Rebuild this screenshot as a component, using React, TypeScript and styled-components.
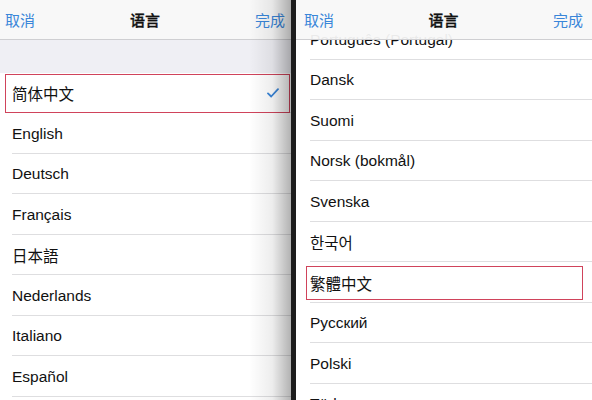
import styled, { createGlobalStyle } from 'styled-components';

const GlobalStyle = createGlobalStyle`
  body {
    margin: 0;
    font-family: "Liberation Sans", "Noto Sans CJK SC", "Noto Sans CJK KR", sans-serif;
    -webkit-font-smoothing: antialiased;
  }
`;

const Screen = styled.div`
  display: flex;
  gap: 5px;
  width: 592px;
  height: 400px;
  overflow: hidden;
  background: #1d1d1d;
`;

const Panel = styled.div<{ $width: number; $shaded?: boolean }>`
  position: relative;
  flex: 0 0 ${p => p.$width}px;
  overflow: hidden;
  background: #fff;

  &::after {
    content: '';
    display: ${p => (p.$shaded ? 'block' : 'none')};
    position: absolute;
    top: 0;
    right: 0;
    bottom: 0;
    width: 42px;
    z-index: 5;
    pointer-events: none;
    background: linear-gradient(to right, rgba(0, 0, 0, 0), rgba(0, 0, 0, 0.07) 55%, rgba(0, 0, 0, 0.3));
  }
`;

const NavBar = styled.div<{ $pad: number }>`
  position: absolute;
  top: 0;
  left: 0;
  right: 0;
  z-index: 3;
  height: 40px;
  box-sizing: border-box;
  display: grid;
  grid-template-columns: 1fr auto 1fr;
  align-items: center;
  padding: 0 ${p => p.$pad}px 0 ${p => p.$pad - 1}px;
  background: rgba(248, 248, 248, 0.94);
  border-bottom: 1px solid #cfcfd2;
  font-size: 15px;
`;

const NavButton = styled.span<{ $end?: boolean }>`
  color: #3a86d9;
  justify-self: ${p => (p.$end ? 'end' : 'start')};
`;

const NavTitle = styled.span`
  color: #111;
  font-weight: 500;
  -webkit-text-stroke: 0.3px #111;
`;

const List = styled.div<{ $top: number }>`
  margin-top: ${p => p.$top}px;
`;

const GroupGap = styled.div`
  height: 32.5px;
  background: #efeff4;
`;

const Row = styled.div<{ $inset: number; $box?: [number, number, number, number] }>`
  position: relative;
  height: 40.5px;
  display: flex;
  padding-left: ${p => p.$inset}px;
  background: #fff;

  &::before {
    content: '';
    display: ${p => (p.$box ? 'block' : 'none')};
    position: absolute;
    top: ${p => p.$box?.[0] ?? 0}px;
    right: ${p => p.$box?.[1] ?? 0}px;
    bottom: ${p => p.$box?.[2] ?? 0}px;
    left: ${p => p.$box?.[3] ?? 0}px;
    border: 1.5px solid #d0435b;
    z-index: 2;
  }
`;

const RowBody = styled.div`
  flex: 1;
  display: flex;
  align-items: center;
  justify-content: space-between;
  padding: 2px 12px 0 0;
  box-sizing: border-box;
  border-bottom: 1px solid #dedee0;
  font-size: 15.5px;
  color: #111;
`;

const Check = () => (
  <svg width="12" height="10" viewBox="0 0 12 10">
    <path d="M1 5.4 L4.2 8.5 L11 1.2" fill="none" stroke="#3a86d9" strokeWidth="1.8" strokeLinecap="round" strokeLinejoin="round" />
  </svg>
);

const leftItems = ['English', 'Deutsch', 'Français', '日本語', 'Nederlands', 'Italiano', 'Español'];
const rightItems = ['Português (Portugal)', 'Dansk', 'Suomi', 'Norsk (bokmål)', 'Svenska', '한국어', '繁體中文', 'Русский', 'Polski', 'Türkçe'];

function Nav({ pad }: { pad: number }) {
  return (
    <NavBar $pad={pad}>
      <NavButton>取消</NavButton>
      <NavTitle>语言</NavTitle>
      <NavButton $end>完成</NavButton>
    </NavBar>
  );
}

export default function App() {
  return (
    <>
      <GlobalStyle />
      <Screen>
        <Panel $width={291} $shaded>
          <Nav pad={6} />
          <List $top={40}>
            <GroupGap />
            <Row $inset={12} $box={[1.5, 1, 0.5, 5]}>
              <RowBody>
                简体中文
                <Check />
              </RowBody>
            </Row>
            {leftItems.map(name => (
              <Row key={name} $inset={12}>
                <RowBody>{name}</RowBody>
              </Row>
            ))}
          </List>
        </Panel>
        <Panel $width={296}>
          <Nav pad={9} />
          <List $top={19}>
            {rightItems.map(name => (
              <Row key={name} $inset={14} $box={name === '繁體中文' ? [3.5, 9.5, 3, 9.5] : undefined}>
                <RowBody>{name}</RowBody>
              </Row>
            ))}
          </List>
        </Panel>
      </Screen>
    </>
  );
}
